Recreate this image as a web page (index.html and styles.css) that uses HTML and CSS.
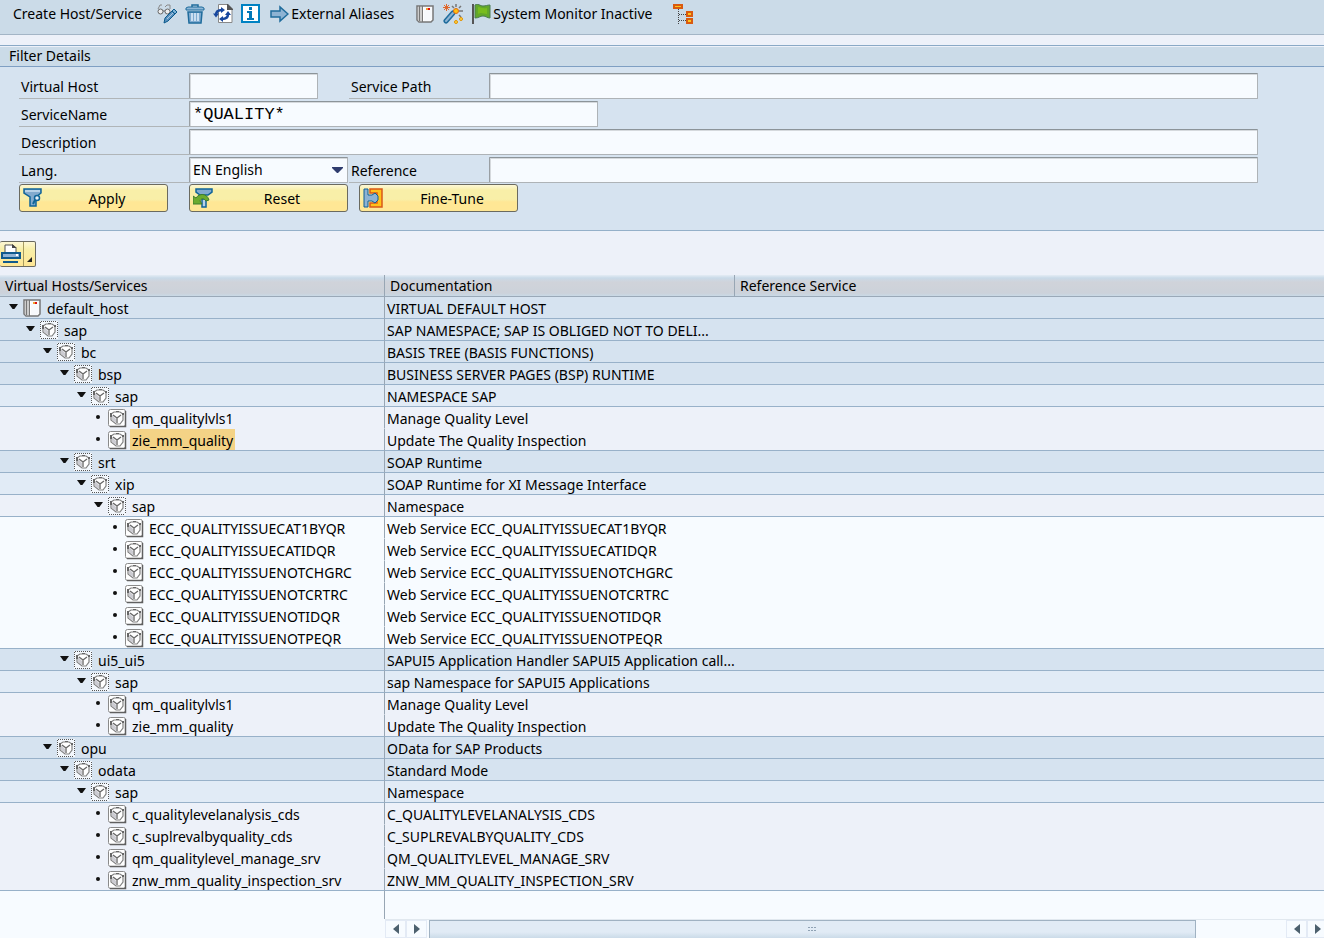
FILE: index.html
```html
<!DOCTYPE html>
<html lang="en">
<head>
  <meta charset="UTF-8">
  <title>Define Services</title>
  <link rel="stylesheet" href="styles.css">
</head>
<body>
<svg class="defs">
  <symbol id="host" viewBox="0 0 20 20">
    <path d="M2 2h16v14l-2 2H4l-2-2z" fill="#fff" stroke="#777" stroke-width="1.500"/>
    <path d="M3 3h4v14H4l-1-1z" fill="#ccc"/>
    <path d="M4.500 2v15M7.500 2v16" stroke="#777"/>
    <path d="M9 3h8v12l-2 2H9z" fill="#f7f9fc"/>
    <path d="M11 4h2v2h-2z" fill="#f0a030"/><path d="M13 4h2v2h-2z" fill="#e01010"/>
  </symbol>
  <symbol id="cube" viewBox="0 0 20 20">
    <path d="M4 6l3-2h6l3 2v6l-3 4H9l-5-4z" fill="#fff" stroke="#808080" stroke-width="1.200"/>
    <path d="M5 7l4 4v4l-4-3z" fill="#ccccd2"/>
    <path d="M6 7l4 3 4-3M10 10v5" fill="none" stroke="#666" stroke-width="1.300"/>
    <path d="M3 5h2v4H3zM9 3h3v1H9zM15 5h2v2h-2z" fill="#666"/>
  </symbol>
  <symbol id="node" viewBox="0 0 20 20">
    <path d="M1 1h18v18H1z" fill="#f4f8fd"/>
    <path d="M2 1.500h16M2 18.500h16M1.500 2v16M18.500 2v16" stroke="#555" stroke-dasharray="1 1" shape-rendering="crispEdges"/>
    <use href="#cube"/>
  </symbol>
  <symbol id="leaf" viewBox="0 0 20 20">
    <rect x="1.500" y="1.500" width="17" height="17" rx="2" fill="#fff" stroke="#8a8a8a"/>
    <path d="M18.500 3v15.500H3" fill="none" stroke="#606060" stroke-width="1.500"/>
    <use href="#cube"/>
  </symbol>
</svg>

<div class="toolbar">
  <button class="tool">Create Host/Service</button>
  <div class="tools">
    <button class="tool" aria-label="Display/Change">
      <svg width="20" height="20" viewBox="0 0 20 20">
        <path d="M1 5l2-4h2M8 3l2-2h3v4" fill="none" stroke="#888"/>
        <circle cx="3.500" cy="7.500" r="2.500" fill="#eee" stroke="#666"/><circle cx="10.500" cy="7.500" r="2.500" fill="#eee" stroke="#666"/><path d="M6 7h2" stroke="#666"/>
        <path d="M7 19l1-5 7-7 3 3-7 7z" fill="#5a90bd" stroke="#0a5a8c"/><path d="M15 7l2-2 3 3-2 2z" fill="#7ab0d4" stroke="#0a5a8c"/><path d="M10 15l6-6" stroke="#a9cbe4"/>
      </svg>
    </button>
    <button class="tool" aria-label="Delete">
      <svg width="20" height="20" viewBox="0 0 20 20">
        <path d="M7 3V1h6v2" fill="none" stroke="#1f6c9c" stroke-width="1.500"/>
        <path d="M1 6V4l2-1h14l2 1v2z" fill="#8fb8d8" stroke="#1f6c9c"/>
        <path d="M3 8h14l-1 11H4z" fill="#7fabd0" stroke="#1f6c9c" stroke-width="1.500"/>
        <path d="M7 9v8M10 9v8M13 9v8" stroke="#e3f0fa" stroke-width="1.500"/>
      </svg>
    </button>
    <button class="tool" aria-label="Refresh">
      <svg width="20" height="20" viewBox="0 0 20 20">
        <path d="M5.500.5H14l5 5v13H5.500z" fill="#fff" stroke="#888"/><path d="M14 0v6h6V5l-5-5z" fill="#555"/>
        <path d="M3 11c0-3 2-5 6-5M15 10c0 3-2 5-6 5" fill="none" stroke="#17479e" stroke-width="2.500"/>
        <path d="M0 9.500h6l-3 4zM12 11h6l-3-4zM8 3l4 3-4 3zM10 12l-4 3 4 3z" fill="#17479e"/>
      </svg>
    </button>
    <button class="tool" aria-label="Information">
      <svg width="20" height="20" viewBox="0 0 20 20">
        <rect x="1" y="1" width="17" height="17" fill="#fff" stroke="#0082c3" stroke-width="2"/>
        <path d="M8 3h3v3H8zM6 7h5v7h2v2H6v-2h2V9H6z" fill="#0078b8"/>
      </svg>
    </button>
    <button class="tool">
      <svg width="20" height="20" viewBox="0 0 20 20">
        <path d="M2 7h9V3l8 7-8 7v-4H2z" fill="#8db3d3" stroke="#1f6c9c" stroke-width="1.500"/>
      </svg>
      <span>External Aliases</span>
    </button>
  </div>
  <div class="tools">
    <button class="tool" aria-label="Virtual host"><svg width="20" height="20"><use href="#host"/></svg></button>
    <button class="tool" aria-label="Activate">
      <svg width="20" height="20" viewBox="0 0 20 20">
        <path d="M3 17l7-8" stroke="#1f6c9c" stroke-width="5" stroke-linecap="round"/><path d="M3 17l7-8" stroke="#8db3d3" stroke-width="2" stroke-linecap="round"/>
        <path d="M13 0v3M18 2l-2 2M16 7h4M9 2l2 2M16 11l2 2" stroke="#777" stroke-width="1.500"/>
        <path d="M1 1l5 5M6 1L1 6M3.500 0v7M0 3.500h7" stroke="#e0662a"/>
        <circle cx="13" cy="7" r="2.500" fill="#ffc20e" stroke="#e06a10"/><circle cx="13" cy="18" r="1.500" fill="#ffd84a" stroke="#e09000"/><circle cx="18" cy="15" r="1.500" fill="#ffd84a" stroke="#e09000"/>
      </svg>
    </button>
    <button class="tool">
      <svg width="20" height="20" viewBox="0 0 20 20">
        <path d="M2 0v20" stroke="#555" stroke-width="2"/>
        <path d="M4 1c3-2 5 1 8 1s4-1 7-1v13c-3 0-4-2-7-2s-4 2-8 2z" fill="#62a82a" stroke="#4c7d52"/>
        <path d="M7 3c3 0 4 2 9 1v6c-4 0-5-2-9 0z" fill="#78bd1e"/>
      </svg>
      <span>System Monitor Inactive</span>
    </button>
  </div>
  <button class="tool" aria-label="Hierarchy">
    <svg width="20" height="20" viewBox="0 0 20 20">
      <path d="M5.500 5v15M6 10.500h7M6 16.500h7" fill="none" stroke="#444" stroke-dasharray="1 1" shape-rendering="crispEdges"/>
      <path d="M1 1h8v3H1zM14 8h5v4h-5zM14 15h5v4h-5z" fill="#ffc61a" stroke="#d95a10" stroke-width="2"/>
    </svg>
  </button>
</div>

<form class="filter">
  <h2>Filter Details</h2>
  <div class="line">
    <label for="vhost">Virtual Host</label>
    <div class="cell"><input id="vhost" class="short" type="text"></div>
    <label for="path" class="second">Service Path</label>
    <input id="path" class="wide" type="text">
  </div>
  <div class="line">
    <label for="service">ServiceName</label>
    <input id="service" class="medium" type="text" value="*QUALITY*">
  </div>
  <div class="line">
    <label for="desc">Description</label>
    <input id="desc" class="wide" type="text">
  </div>
  <div class="line">
    <label for="lang">Lang.</label>
    <div class="cell select">
      <select id="lang"><option>EN English</option></select>
      <svg width="11" height="6"><path d="M0 0h11v1L6 6H5L0 1z" fill="#2f3c6e"/></svg>
    </div>
    <label for="ref" class="second">Reference</label>
    <input id="ref" class="wide" type="text">
  </div>
  <div class="actions">
    <button type="button" class="yellow apply">
      <svg width="20" height="20" viewBox="0 0 20 20">
        <path d="M1 1h17v4l-5 4v9H7V9L1 5z" fill="#82aace" stroke="#0f6499" stroke-width="1.500"/>
        <path d="M2 3h15" stroke="#b8d2e8" stroke-width="2"/><circle cx="14" cy="10" r="2.500" fill="#e5f0f8" stroke="#0f6499" stroke-width="1.500"/><path d="M12 12l-2 4" stroke="#0f6499" stroke-width="2"/>
      </svg>
      <span>Apply</span>
    </button>
    <button type="button" class="yellow">
      <svg width="20" height="20" viewBox="0 0 20 20">
        <path d="M3 1h16v3l-4 3H7L3 4z" fill="#82aace" stroke="#0f6499" stroke-width="1.500"/>
        <path d="M9 11h4v8H9z" fill="#b8d2e8" stroke="#0f6499" stroke-width="1.500"/>
        <path d="M0 8l3 2c3-5 11-5 13 2l-3 1c-2-3-5-3-6 0l2 3H0z" fill="#6cab2e" stroke="#3d7d2c"/>
      </svg>
      <span>Reset</span>
    </button>
    <button type="button" class="yellow">
      <svg width="20" height="20" viewBox="0 0 20 20">
        <path d="M7 1h12v18H7v-4h7V5H7z" fill="#ffc21a" stroke="#d9581a" stroke-width="1.500"/>
        <path d="M1 1h4v6h4l3-2 3 3v4l-3 3-3-2H5v6H1z" fill="#8db3d3" stroke="#0f5f96"/>
      </svg>
      <span>Fine-Tune</span>
    </button>
  </div>
</form>

<div class="listbar">
  <button class="print" aria-label="Print">
    <svg width="36" height="24" viewBox="0 0 36 24">
      <path d="M5 10V3h8l3 3v4" fill="#fff" stroke="#555"/><path d="M12 2v4h5z" fill="#444"/>
      <path d="M2 11h18v5H2z" fill="#8fb4d6" stroke="#0f5a8e" stroke-width="2"/><path d="M16 12h2v2h-2z" fill="#fff"/>
      <path d="M3 19h15v2H3z" fill="#0f5a8e"/><path d="M23.500 0v24" stroke="#a89c60"/><path d="M32 15v5h-5z" fill="#222"/>
    </svg>
  </button>
</div>

<div class="tree">
  <table>
    <colgroup><col class="c1"><col class="c2"><col></colgroup>
    <thead>
      <tr><th>Virtual Hosts/Services</th><th>Documentation</th><th>Reference Service</th></tr>
    </thead>
    <tbody>
      <tr class="l0"><td><div><i class="open"></i><svg class="ico"><use href="#host"/></svg><span>default_host</span></div></td><td>VIRTUAL DEFAULT HOST</td><td></td></tr>
      <tr class="l1"><td><div><i class="open"></i><svg class="ico"><use href="#node"/></svg><span>sap</span></div></td><td>SAP NAMESPACE; SAP IS OBLIGED NOT TO DELI...</td><td></td></tr>
      <tr class="l2"><td><div><i class="open"></i><svg class="ico"><use href="#node"/></svg><span>bc</span></div></td><td>BASIS TREE (BASIS FUNCTIONS)</td><td></td></tr>
      <tr class="l3"><td><div><i class="open"></i><svg class="ico"><use href="#node"/></svg><span>bsp</span></div></td><td>BUSINESS SERVER PAGES (BSP) RUNTIME</td><td></td></tr>
      <tr class="l4"><td><div><i class="open"></i><svg class="ico"><use href="#node"/></svg><span>sap</span></div></td><td>NAMESPACE SAP</td><td></td></tr>
      <tr class="l5 mid"><td><div><i class="dot"></i><svg class="ico"><use href="#leaf"/></svg><span>qm_qualitylvls1</span></div></td><td>Manage Quality Level</td><td></td></tr>
      <tr class="l5"><td><div><i class="dot"></i><svg class="ico"><use href="#leaf"/></svg><span class="marked">zie_mm_quality</span></div></td><td>Update The Quality Inspection</td><td></td></tr>
      <tr class="l3"><td><div><i class="open"></i><svg class="ico"><use href="#node"/></svg><span>srt</span></div></td><td>SOAP Runtime</td><td></td></tr>
      <tr class="l4"><td><div><i class="open"></i><svg class="ico"><use href="#node"/></svg><span>xip</span></div></td><td>SOAP Runtime for XI Message Interface</td><td></td></tr>
      <tr class="l5"><td><div><i class="open"></i><svg class="ico"><use href="#node"/></svg><span>sap</span></div></td><td>Namespace</td><td></td></tr>
      <tr class="l6 mid"><td><div><i class="dot"></i><svg class="ico"><use href="#leaf"/></svg><span>ECC_QUALITYISSUECAT1BYQR</span></div></td><td>Web Service ECC_QUALITYISSUECAT1BYQR</td><td></td></tr>
      <tr class="l6 mid"><td><div><i class="dot"></i><svg class="ico"><use href="#leaf"/></svg><span>ECC_QUALITYISSUECATIDQR</span></div></td><td>Web Service ECC_QUALITYISSUECATIDQR</td><td></td></tr>
      <tr class="l6 mid"><td><div><i class="dot"></i><svg class="ico"><use href="#leaf"/></svg><span>ECC_QUALITYISSUENOTCHGRC</span></div></td><td>Web Service ECC_QUALITYISSUENOTCHGRC</td><td></td></tr>
      <tr class="l6 mid"><td><div><i class="dot"></i><svg class="ico"><use href="#leaf"/></svg><span>ECC_QUALITYISSUENOTCRTRC</span></div></td><td>Web Service ECC_QUALITYISSUENOTCRTRC</td><td></td></tr>
      <tr class="l6 mid"><td><div><i class="dot"></i><svg class="ico"><use href="#leaf"/></svg><span>ECC_QUALITYISSUENOTIDQR</span></div></td><td>Web Service ECC_QUALITYISSUENOTIDQR</td><td></td></tr>
      <tr class="l6"><td><div><i class="dot"></i><svg class="ico"><use href="#leaf"/></svg><span>ECC_QUALITYISSUENOTPEQR</span></div></td><td>Web Service ECC_QUALITYISSUENOTPEQR</td><td></td></tr>
      <tr class="l3"><td><div><i class="open"></i><svg class="ico"><use href="#node"/></svg><span>ui5_ui5</span></div></td><td>SAPUI5 Application Handler SAPUI5 Application call...</td><td></td></tr>
      <tr class="l4"><td><div><i class="open"></i><svg class="ico"><use href="#node"/></svg><span>sap</span></div></td><td>sap Namespace for SAPUI5 Applications</td><td></td></tr>
      <tr class="l5 mid"><td><div><i class="dot"></i><svg class="ico"><use href="#leaf"/></svg><span>qm_qualitylvls1</span></div></td><td>Manage Quality Level</td><td></td></tr>
      <tr class="l5"><td><div><i class="dot"></i><svg class="ico"><use href="#leaf"/></svg><span>zie_mm_quality</span></div></td><td>Update The Quality Inspection</td><td></td></tr>
      <tr class="l2"><td><div><i class="open"></i><svg class="ico"><use href="#node"/></svg><span>opu</span></div></td><td>OData for SAP Products</td><td></td></tr>
      <tr class="l3"><td><div><i class="open"></i><svg class="ico"><use href="#node"/></svg><span>odata</span></div></td><td>Standard Mode</td><td></td></tr>
      <tr class="l4"><td><div><i class="open"></i><svg class="ico"><use href="#node"/></svg><span>sap</span></div></td><td>Namespace</td><td></td></tr>
      <tr class="l5 mid"><td><div><i class="dot"></i><svg class="ico"><use href="#leaf"/></svg><span>c_qualitylevelanalysis_cds</span></div></td><td>C_QUALITYLEVELANALYSIS_CDS</td><td></td></tr>
      <tr class="l5 mid"><td><div><i class="dot"></i><svg class="ico"><use href="#leaf"/></svg><span>c_suplrevalbyquality_cds</span></div></td><td>C_SUPLREVALBYQUALITY_CDS</td><td></td></tr>
      <tr class="l5 mid"><td><div><i class="dot"></i><svg class="ico"><use href="#leaf"/></svg><span>qm_qualitylevel_manage_srv</span></div></td><td>QM_QUALITYLEVEL_MANAGE_SRV</td><td></td></tr>
      <tr class="l5"><td><div><i class="dot"></i><svg class="ico"><use href="#leaf"/></svg><span>znw_mm_quality_inspection_srv</span></div></td><td>ZNW_MM_QUALITY_INSPECTION_SRV</td><td></td></tr>
    </tbody>
  </table>
  <div class="rest"></div>
  <div class="scroll">
    <button aria-label="Scroll left"><svg width="6" height="10"><path d="M6 0v10L0 5z"/></svg></button>
    <button aria-label="Scroll right"><svg width="6" height="10"><path d="M0 0v10l6-5z"/></svg></button>
    <div class="track">
      <div class="thumb"><svg width="9" height="8"><path d="M0 1.500h2M3 1.500h2M6 1.500h2M0 4.500h2M3 4.500h2M6 4.500h2" stroke="#8fa2b4"/></svg></div>
    </div>
    <button aria-label="Page left"><svg width="6" height="10"><path d="M6 0v10L0 5z"/></svg></button>
    <button aria-label="Page right"><svg width="6" height="10"><path d="M0 0v10l6-5z"/></svg></button>
  </div>
</div>
</body>
</html>
```
FILE: styles.css
```css
* {
  box-sizing: border-box;
  margin: 0;
  padding: 0;
}

html, body {
  height: 100%;
}

body {
  display: flex;
  flex-direction: column;
  overflow: hidden;
  background: #edf1f9;
  font-family: "Noto Sans", Tahoma, sans-serif;
  font-size: 14px;
  line-height: 20px;
  color: #000;
}

button, select {
  font: inherit;
  color: inherit;
}

svg {
  display: block;
  flex: none;
}

.defs {
  position: absolute;
  width: 0;
  height: 0;
}

/* top toolbar */
.toolbar {
  display: flex;
  align-items: flex-start;
  height: 35px;
  padding: 3px 13px;
  gap: 21px;
  background: #cbdbe8;
  border-bottom: 1px solid #a3b5c6;
  white-space: nowrap;
}

.toolbar > .tool:first-child {
  margin-right: -6px;
}

.tools {
  display: flex;
  gap: 8px;
}

.tool {
  display: flex;
  align-items: center;
  gap: 2px;
  height: 21px;
  background: none;
  border: 0;
}

/* filter */
.filter {
  flex: none;
  margin-top: 10px;
  height: 186px;
  background: #d6e3f0;
  border-top: 1px solid #8aa9c6;
  border-bottom: 1px solid #94b0c9;
}

.filter h2 {
  height: 21px;
  padding-left: 9px;
  background: #cbdbe8;
  border-top: 1px solid #edf1f9;
  border-bottom: 1px solid #7f9fc3;
  font-size: 14px;
  font-weight: normal;
  line-height: 18px;
  margin-bottom: 6px;
}

.line {
  display: flex;
  height: 26px;
  margin: 0 66px 2px 19px;
}

.line label {
  width: 170px;
  padding: 4px 2px 0;
  border-bottom: 1px solid #b0b5b8;
}

.line .second {
  width: 140px;
}

.line input, .line select {
  height: 26px;
  padding: 0 3px;
  background: #f7fbff;
  border: 1px solid #aeb3b7;
  border-top-color: #8c9499;
  border-left-color: #999fa4;
  border-radius: 1px;
  box-shadow: inset 1px 1px 0 #d5d9dd;
  font-family: "Liberation Mono", monospace;
  font-size: 17px;
  outline: none;
}

.cell {
  width: 160px;
}

.line .short {
  width: 129px;
}

.line .medium {
  width: 409px;
}

.line .wide {
  flex: 1;
  min-width: 0;
}

.select {
  position: relative;
}

.line select {
  width: 159px;
  appearance: none;
  font-family: inherit;
  font-size: 14px;
}

.select svg {
  position: absolute;
  right: 6px;
  top: 10px;
  pointer-events: none;
}

.actions {
  display: flex;
  margin-left: 19px;
}

.yellow {
  display: flex;
  align-items: center;
  width: 159px;
  height: 28px;
  margin: -1px 11px 0 0;
  padding: 0 3px;
  background: linear-gradient(#fdf8d6, #f8efa8 20%, #f8efa8 55%, #ffe795 65%);
  border: 1px solid #6a6a60;
  border-radius: 3px;
}

.apply {
  width: 149px;
  margin-right: 21px;
}

.yellow span {
  flex: 1;
  padding: 2px 0 0 7px;
}

/* list toolbar */
.listbar {
  flex: none;
  height: 44px;
  padding-top: 10px;
}

.print {
  display: block;
  width: 36px;
  height: 26px;
  background: linear-gradient(#fdf8d6, #f8efa8 30%, #ffe795);
  border: 1px solid #6a6a60;
  border-left: 0;
  border-radius: 2px;
}

/* service tree */
.tree {
  display: flex;
  flex-direction: column;
  flex: 1;
  background: #f7fbff;
}

table {
  width: 100%;
  table-layout: fixed;
  border-collapse: separate;
  border-spacing: 0;
}

.c1 {
  width: 385px;
}

.c2 {
  width: 350px;
}

th {
  height: 22px;
  padding: 0 5px;
  background: linear-gradient(#e4ecf4, #c9dae8 3px, #d0d3da 7px, #ccd2da 18px, #c9d9e6);
  border-bottom: 1px solid #9aa9b8;
  font-weight: normal;
  text-align: left;
  line-height: 20px;
}

th:not(:last-child), td:first-child {
  border-right: 1px solid #98a6b4;
}

td {
  height: 22px;
  padding: 0 2px;
  border-bottom: 1px solid #98b1c9;
  line-height: 19px;
  white-space: nowrap;
}

td:nth-child(2) {
  padding-top: 2px;
}

td > div {
  display: flex;
  align-items: center;
  height: 21px;
}

td span {
  height: 21px;
  margin-left: 3px;
  padding: 2px 2px 0;
}

.marked {
  background: #f4d386;
}

.l5.mid td {
  border-bottom-color: #edf1f9;
}

.l6.mid td {
  border-bottom-color: #f7fbff;
}

.ico {
  width: 20px;
  height: 20px;
}

.open {
  width: 9px;
  height: 5px;
  margin: 0 4px 2px 0;
  background: #111;
  clip-path: polygon(0 0, 100% 0, 60% 100%, 40% 100%);
}

.dot {
  width: 4px;
  height: 4px;
  margin: 0 7px 2px 2px;
  border-radius: 2px;
  background: #111;
}

.l0, .l1, .l2, .l3 {
  background: #d6e3f0;
}

.l4 {
  background: #e1ebf6;
}

.l5 {
  background: #edf1f9;
}

.l6 {
  background: #f7fbff;
}

.l0 td:first-child { padding-left: 9px; }
.l1 td:first-child { padding-left: 26px; }
.l2 td:first-child { padding-left: 43px; }
.l3 td:first-child { padding-left: 60px; }
.l4 td:first-child { padding-left: 77px; }
.l5 td:first-child { padding-left: 94px; }
.l6 td:first-child { padding-left: 111px; }

.rest {
  flex: 1;
  width: 385px;
  border-right: 1px solid #98a6b4;
}

.scroll {
  display: flex;
  height: 19px;
  margin: 0 -4px 0 385px;
  border-top: 1px solid #e1e8ef;
}

.scroll button {
  display: flex;
  align-items: center;
  justify-content: center;
  width: 21px;
  background: #f7fbff;
  border: 1px solid #e3eaf5;
}

.scroll button path {
  fill: #4c606e;
}

.track {
  flex: 1;
  padding-left: 2px;
}

.thumb {
  display: flex;
  align-items: center;
  justify-content: center;
  width: calc(100% - 90px);
  height: 19px;
  background: linear-gradient(#e1ebf5 65%, #cbdbe8);
  border: 1px solid #a0b2c2;
}
```
